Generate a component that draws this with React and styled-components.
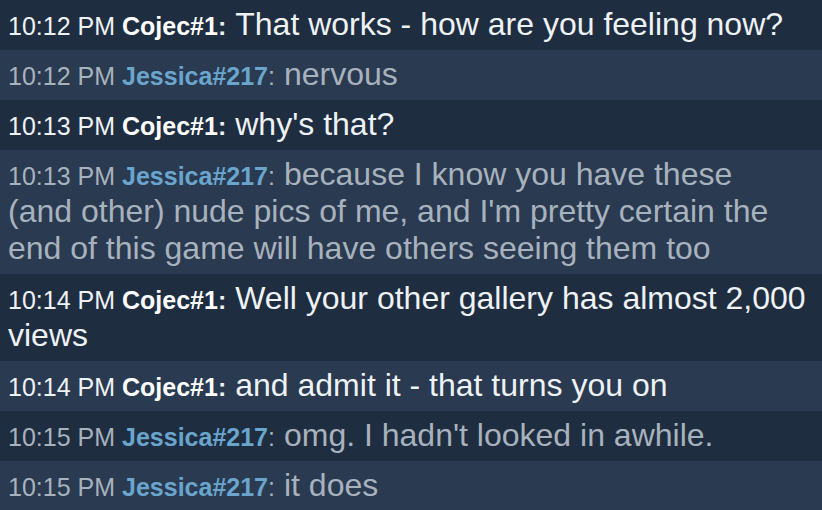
import styled, { createGlobalStyle } from "styled-components";

const GlobalStyle = createGlobalStyle`
  html, body {
    margin: 0;
    padding: 0;
    background: #1f2d40;
  }
  body {
    font-family: "Liberation Sans", Arial, sans-serif;
  }
`;

const Log = styled.div`
  width: 822px;
  height: 510px;
  overflow: hidden;
  display: flex;
  flex-direction: column;
`;

const Row = styled.div`
  background: ${(p) => (p.$alt ? "#2a3a50" : "#1f2d40")};
  padding: 6px 0 7px 8px;
  font-size: 32px;
  line-height: 37px;
  color: ${(p) => (p.$self ? "#eef2f5" : "#a8b2bd")};
`;

const Time = styled.span`
  font-size: 25px;
  line-height: 1;
  margin-right: 7px;
`;

const Name = styled.span`
  font-size: 25px;
  line-height: 1;
  font-weight: bold;
  color: ${(p) => (p.$self ? "#ffffff" : "#6aa5cd")};
`;

const Colon = styled.span`
  font-size: 25px;
  line-height: 1;
  font-weight: ${(p) => (p.$self ? "bold" : "normal")};
  margin-right: 9px;
`;

const Text = styled.span`
  font-size: 32px;
`;

const messages = [
  { time: "10:12 PM", name: "Cojec#1", self: true, lines: ["That works - how are you feeling now?"] },
  { time: "10:12 PM", name: "Jessica#217", lines: ["nervous"] },
  { time: "10:13 PM", name: "Cojec#1", self: true, lines: ["why's that?"] },
  {
    time: "10:13 PM",
    name: "Jessica#217",
    lines: [
      "because I know you have these",
      "(and other) nude pics of me, and I'm pretty certain the",
      "end of this game will have others seeing them too",
    ],
  },
  { time: "10:14 PM", name: "Cojec#1", self: true, lines: ["Well your other gallery has almost 2,000", "views"] },
  { time: "10:14 PM", name: "Cojec#1", self: true, lines: ["and admit it - that turns you on"] },
  { time: "10:15 PM", name: "Jessica#217", lines: ["omg. I hadn't looked in awhile."] },
  { time: "10:15 PM", name: "Jessica#217", lines: ["it does"] },
];

export default function App() {
  return (
    <>
      <GlobalStyle />
      <Log>
        {messages.map((m, i) => (
          <Row key={i} $alt={i % 2 === 1} $self={m.self}>
            <Time>{m.time}</Time>
            <Name $self={m.self}>{m.name}</Name>
            <Colon $self={m.self}>:</Colon>
            <Text>
              {m.lines.map((line, j) => (
                <span key={j}>
                  {j > 0 && <br />}
                  {line}
                </span>
              ))}
            </Text>
          </Row>
        ))}
      </Log>
    </>
  );
}
